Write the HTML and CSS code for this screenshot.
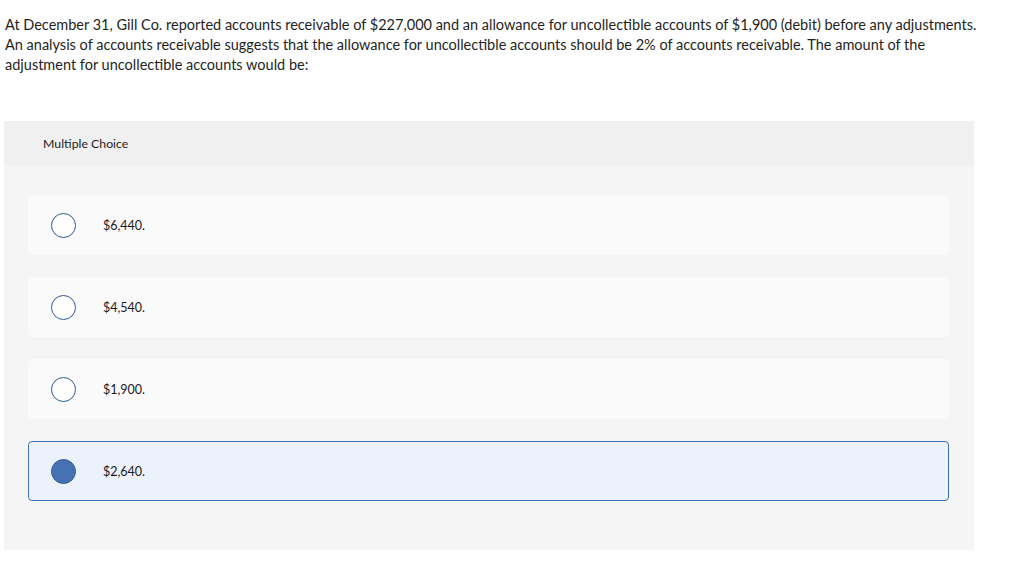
FILE: index.html
```html
<!DOCTYPE html>
<html>
<head>
<meta charset="utf-8">
<link rel="stylesheet" href="styles.css">
</head>
<body>
<div class="page">
  <p class="question">At December 31, Gill Co. reported accounts receivable of $227,000 and an allowance for uncollectible accounts of $1,900 (debit) before any adjustments. An analysis of accounts receivable suggests that the allowance for uncollectible accounts should be 2% of accounts receivable. The amount of the adjustment for uncollectible accounts would be:</p>
  <div class="panel">
    <div class="panel-head">Multiple Choice</div>
    <div class="choices">
      <div class="choice"><span class="radio"></span><span class="label">$6,440.</span></div>
      <div class="choice"><span class="radio"></span><span class="label">$4,540.</span></div>
      <div class="choice"><span class="radio"></span><span class="label">$1,900.</span></div>
      <div class="choice selected"><span class="radio"></span><span class="label">$2,640.</span></div>
    </div>
  </div>
</div>
</body>
</html>
```
FILE: styles.css
```css
html, body {
  margin: 0;
  padding: 0;
  background: #fff;
}
body {
  font-family: Lato, "Liberation Sans", sans-serif;
  color: #1a1a1a;
}
.page {
  width: 970px;
  margin-left: 4px;
  padding-top: 15px;
}
.question {
  margin: 0;
  width: 982px;
  padding-left: 1px;
  font-size: 14.5px;
  line-height: 20px;
  color: #1f1f1f;
}
.panel {
  margin-top: 46px;
  background: #f5f5f5;
}
.panel-head {
  background: #f0f0f0;
  height: 45px;
  box-sizing: border-box;
  padding-left: 39px;
  display: flex;
  align-items: center;
  font-size: 12.3px;
  color: #222;
}
.choices {
  display: flex;
  flex-direction: column;
  gap: 22px;
  padding: 29px 25px 49px 24px;
}
.choice {
  height: 60px;
  box-sizing: border-box;
  background: #fafafa;
  border: 1px solid #fafafa;
  border-radius: 4px;
  display: flex;
  align-items: center;
  padding-left: 22px;
}
.radio {
  width: 25px;
  height: 25px;
  box-sizing: border-box;
  border: 1.5px solid #2f5a99;
  border-radius: 50%;
  background: #fff;
  flex: none;
}
.label {
  margin-left: 27px;
  font-size: 12.5px;
  color: #1a1a1a;
}
.choice.selected {
  background: #ebf2fb;
  border-color: #3f72b9;
}
.choice.selected .radio {
  background: #4671b2;
  border-color: #355e9c;
}
```
